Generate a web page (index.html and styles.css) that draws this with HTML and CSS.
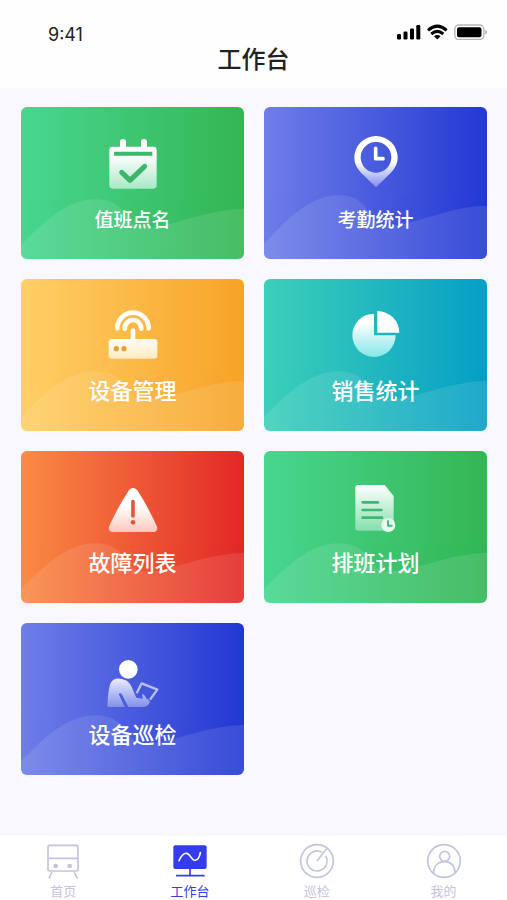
FILE: index.html
```html
<!DOCTYPE html>
<html lang="zh-CN">
<head>
<meta charset="utf-8">
<meta name="viewport" content="width=device-width, initial-scale=1">
<title>工作台</title>
<link rel="stylesheet" href="styles.css">
</head>
<body>
<svg class="defs" width="0" height="0" aria-hidden="true">
  <defs>
    <linearGradient id="fade-green" x1="0" y1="0" x2="0" y2="1"><stop offset=".2" stop-color="#fff"/><stop offset="1" stop-color="#a9e8c5"/></linearGradient>
    <linearGradient id="fade-doc" x1="0" y1="0" x2="0" y2="1"><stop offset="0" stop-color="#fff"/><stop offset="1" stop-color="#86dfae"/></linearGradient>
    <linearGradient id="fade-pin" x1="0" y1="0" x2="0" y2="1"><stop offset=".5" stop-color="#fff"/><stop offset="1" stop-color="#7f8ceb"/></linearGradient>
    <linearGradient id="fade-yellow" x1="0" y1="0" x2="0" y2="1"><stop offset="0" stop-color="#fffdf8"/><stop offset="1" stop-color="#feeac0"/></linearGradient>
    <linearGradient id="fade-teal" x1="0" y1="0" x2="0" y2="1"><stop offset=".2" stop-color="#fff"/><stop offset="1" stop-color="#86e6e6"/></linearGradient>
    <linearGradient id="fade-red" x1="0" y1="0" x2="0" y2="1"><stop offset=".4" stop-color="#fff"/><stop offset="1" stop-color="#fcc8bd"/></linearGradient>
    <linearGradient id="fade-person" x1="0" y1="0" x2="0" y2="1"><stop offset="0" stop-color="#e9ecfd"/><stop offset="1" stop-color="#8390ea"/></linearGradient>
    <symbol id="wave" viewBox="0 0 668 180" preserveAspectRatio="none">
      <path d="M0 138C55 85 130 0 225 1C300 2 306 48 340 78C400 110 540 30 668 30V180H0Z"/>
    </symbol>
  </defs>
</svg>

<header class="header">
  <div class="status">
    <time class="status__time">9:41</time>
    <svg class="status__icons" viewBox="0 0 90 16" aria-hidden="true">
      <rect x="0" y="10" width="4" height="5.500" rx="1.200"/>
      <rect x="6.500" y="7.500" width="4" height="8" rx="1.200"/>
      <rect x="13" y="4.500" width="4" height="11" rx="1.200"/>
      <rect x="19.300" y="1" width="4" height="14.500" rx="1.200"/>
      <g fill="none" stroke="#000" stroke-width="3">
        <path d="M31 6.300Q40.300-2 49.600 6.300"/>
        <path d="M34.300 10Q40.300 4.800 46.300 10"/>
      </g>
      <path d="M37 12.300Q40.300 9.600 43.600 12.300L40.300 15.500Z"/>
      <rect x="57.800" y="1" width="29" height="14.500" rx="4" fill="#fff" stroke="#b5b5b3" stroke-width="1.400"/>
      <rect x="60" y="3.200" width="24.500" height="10" rx="2"/>
      <path d="M88.300 6V10.500Q90 10 90 8.200Q90 6.500 88.300 6Z" fill="#a5a5a5"/>
    </svg>
  </div>
  <h1 class="header__title">工作台</h1>
</header>

<main class="board">
  <a class="tile tile--green tile--compact" href="#roll-call">
    <svg class="tile__wave"><use href="#wave"/></svg>
    <svg class="tile__icon" viewBox="278 93 180 180" aria-hidden="true">
      <path d="M307 140H429Q439 140 439 150V256Q439 266 429 266H307Q297 266 297 256V150Q297 140 307 140Z" fill="url(#fade-green)"/>
      <path d="M338 126V144M401 126V144" stroke="#fff" stroke-width="18" stroke-linecap="round"/>
      <path d="M311 161H426" stroke="#3cb96c" stroke-width="12"/>
      <path d="M334 217L359 241L403 199" fill="none" stroke="#3cb46a" stroke-width="15" stroke-linecap="round" stroke-linejoin="round"/>
    </svg>
    <span class="tile__label">值班点名</span>
  </a>
  <a class="tile tile--blue tile--compact" href="#attendance">
    <svg class="tile__wave tile__wave--high"><use href="#wave"/></svg>
    <svg class="tile__icon" viewBox="272 93 180 180" aria-hidden="true">
      <path fill-rule="evenodd" d="M362 108A65 65 0 0 1 427 173C427 197 412 213 399 226L362 262L325 226C312 213 297 197 297 173A65 65 0 0 1 362 108ZM362 126A46 46 0 1 0 362 218A46 46 0 1 0 362 126Z" fill="url(#fade-pin)"/>
      <path d="M361 145V176H383" fill="none" stroke="#fff" stroke-width="11" stroke-linecap="round" stroke-linejoin="round"/>
    </svg>
    <span class="tile__label">考勤统计</span>
  </a>
  <a class="tile tile--yellow" href="#devices">
    <svg class="tile__wave"><use href="#wave"/></svg>
    <svg class="tile__icon" viewBox="278 99 180 180" aria-hidden="true">
      <g fill="none" stroke="#fffdf8" stroke-width="14" stroke-linecap="round">
        <path d="M321 175A47 47 0 0 1 415 175"/>
        <path d="M343 176A25 26 0 0 1 393 176"/>
        <path d="M368 182V212"/>
      </g>
      <rect x="295" y="207" width="146" height="59" rx="9" fill="url(#fade-yellow)"/>
      <circle cx="318" cy="236" r="8" fill="#dea13c"/>
      <circle cx="341" cy="236" r="8" fill="#dea13c"/>
    </svg>
    <span class="tile__label">设备管理</span>
  </a>
  <a class="tile tile--teal" href="#sales">
    <svg class="tile__wave"><use href="#wave"/></svg>
    <svg class="tile__icon" viewBox="272 99 180 180" aria-hidden="true">
      <path d="M356 131V196H421A65 65 0 1 1 356 131Z" fill="url(#fade-teal)"/>
      <path d="M366 123A66 66 0 0 1 432 188H366Z" fill="#fff"/>
    </svg>
    <span class="tile__label">销售统计</span>
  </a>
  <a class="tile tile--red" href="#faults">
    <svg class="tile__wave"><use href="#wave"/></svg>
    <svg class="tile__icon" viewBox="278 99 180 180" aria-hidden="true">
      <path d="M356 145Q368 131 381 145Q414 196 440 254Q443 269 429 270H307Q293 269 296 254Q322 196 356 145Z" fill="url(#fade-red)"/>
      <path d="M368 179V222" stroke="#e1563a" stroke-width="11" stroke-linecap="round"/>
      <circle cx="368" cy="241" r="7" fill="#e1563a"/>
    </svg>
    <span class="tile__label">故障列表</span>
  </a>
  <a class="tile tile--green" href="#shifts">
    <svg class="tile__wave"><use href="#wave"/></svg>
    <svg class="tile__icon" viewBox="272 99 180 180" aria-hidden="true">
      <path d="M308 129H388L415 162V258Q415 266 407 266H308Q300 266 300 258V137Q300 129 308 129Z" fill="url(#fade-doc)"/>
      <path d="M322 181H368M322 204H378M322 227H380" stroke="#3fb674" stroke-width="8" stroke-linecap="round"/>
      <circle cx="399" cy="249" r="21" fill="#e8f9ef"/>
      <path d="M398 237V251H409" fill="none" stroke="#45bd78" stroke-width="6" stroke-linecap="round" stroke-linejoin="round"/>
    </svg>
    <span class="tile__label">排班计划</span>
  </a>
  <a class="tile tile--blue" href="#inspection">
    <svg class="tile__wave"><use href="#wave"/></svg>
    <svg class="tile__icon" viewBox="278 99 180 180" aria-hidden="true">
      <circle cx="354" cy="166" r="28" fill="#fff"/>
      <path d="M291 279C292 250 294 228 299 212C304 197 316 193 328 194C348 196 358 204 364 219L378 251L398 254L395 242Q400 239 404 246L409 255Q419 257 418 264Q415 277 400 279H354L334 240Q329 235 325 240L343 279Z" fill="url(#fade-person)"/>
      <path d="M379 238L394 208L441 227L419 257" fill="none" stroke="#b8c0f4" stroke-width="7" stroke-linejoin="round"/>
    </svg>
    <span class="tile__label">设备巡检</span>
  </a>
</main>

<nav class="tabs">
  <a class="tab" href="#home">
    <svg class="tab__icon" viewBox="138 54 108 108" aria-hidden="true">
      <rect x="147" y="61" width="90" height="77" rx="5"/>
      <path d="M147 100H237M159 141L150 161M226 141L235 161"/>
      <circle class="tab__dot" cx="170" cy="123" r="7"/>
      <circle class="tab__dot" cx="212" cy="123" r="7"/>
    </svg>
    <span class="tab__label">首页</span>
  </a>
  <a class="tab tab--active" href="#workbench" aria-current="page">
    <svg class="tab__icon" viewBox="523 54 108 108" aria-hidden="true">
      <rect class="tab__screen" x="527" y="61" width="100" height="71" rx="6"/>
      <path d="M577 132V151M537 152H619" stroke-linecap="round"/>
      <path class="tab__curve" d="M544 107C553 88 561 84 567 85C580 87 580 106 591 106C601 106 606 95 608 83"/>
    </svg>
    <span class="tab__label">工作台</span>
  </a>
  <a class="tab" href="#patrol">
    <svg class="tab__icon" viewBox="138 54 108 108" aria-hidden="true">
      <circle cx="192" cy="108" r="49"/>
      <path d="M207 82A30 30 0 1 0 218 93M192 108L221 71"/>
    </svg>
    <span class="tab__label">巡检</span>
  </a>
  <a class="tab" href="#me">
    <svg class="tab__icon" viewBox="517 54 108 108" aria-hidden="true">
      <circle cx="571" cy="108" r="49"/>
      <circle cx="573" cy="94" r="15"/>
      <path d="M540 145C540 123 553 110 573 110C592 110 604 123 604 143"/>
    </svg>
    <span class="tab__label">我的</span>
  </a>
</nav>
</body>
</html>
```

FILE: styles.css
```css
* {
  box-sizing: border-box;
}

body {
  margin: 0;
  min-height: 100vh;
  display: flex;
  flex-direction: column;
  background: #f8f8fe;
  color: #222;
  font-family: Inter, "Noto Sans CJK SC", sans-serif;
}

a {
  text-decoration: none;
}

.defs {
  position: absolute;
}

.header {
  padding: 24px 0 14px;
  background: #fefefe;
}

.status {
  display: flex;
  justify-content: space-between;
  align-items: flex-start;
  padding: 0 20px 0 48px;
}

.status__time {
  font-size: 18px;
  line-height: 22px;
}

.status__icons {
  width: 90px;
  height: 16px;
}

.header__title {
  margin: 0;
  font-size: 24px;
  font-weight: 500;
  line-height: 28px;
  text-align: center;
}

.board {
  flex: 1;
  display: grid;
  grid-template-columns: 1fr 1fr;
  align-content: start;
  gap: 20px;
  padding: 19px 20px 20px 21px;
}

.tile {
  position: relative;
  display: flex;
  flex-direction: column;
  align-items: center;
  gap: 12px;
  padding: 24px 0;
  overflow: hidden;
  border-radius: 6px;
  color: #fff;
}

.tile--green {
  background: linear-gradient(90deg, #48d690, #33b653);
}

.tile--blue {
  background: linear-gradient(90deg, #6f7ee8, #2238d3);
}

.tile--yellow {
  background: linear-gradient(90deg, #ffcf66, #f7a327);
}

.tile--teal {
  background: linear-gradient(90deg, #3cd0b8, #069fc6);
}

.tile--red {
  background: linear-gradient(90deg, #fa8b44, #e22827);
}

.tile__wave {
  position: absolute;
  left: 0;
  bottom: 0;
  width: 100%;
  height: 60px;
  fill: #fff;
  opacity: 0.1;
}

.tile__wave--high {
  height: 64px;
}

.tile__icon {
  position: relative;
  width: 60px;
  height: 60px;
}

.tile__label {
  position: relative;
  font-size: 22px;
  font-weight: 500;
  line-height: 32px;
}

.tile--compact {
  gap: 14px;
  padding-bottom: 22px;
}

.tile--compact .tile__label {
  font-size: 19px;
}

.tabs {
  display: grid;
  grid-template-columns: repeat(4, 1fr);
  background: #fff;
}

.tab {
  display: flex;
  flex-direction: column;
  align-items: center;
  gap: 3px;
  padding-top: 7px;
  color: #c3c5de;
}

.tab--active {
  color: #343cf0;
}

.tab__icon {
  width: 36px;
  height: 36px;
  fill: none;
  stroke: currentColor;
  stroke-width: 5px;
}

.tab__dot {
  fill: currentColor;
  stroke: none;
}

.tab__screen {
  fill: currentColor;
  stroke: none;
}

.tab__curve {
  stroke: #fff;
  stroke-linecap: round;
}

.tab__label {
  font-size: 13px;
  line-height: 18px;
}
```
